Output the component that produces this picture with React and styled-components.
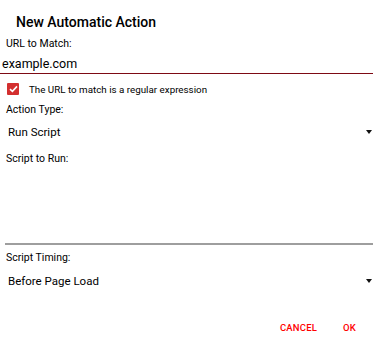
import React from "react";
import styled, { createGlobalStyle } from "styled-components";

const Global = createGlobalStyle`
  html, body { margin: 0; padding: 0; background: #fff; }
  body { font-family: Roboto, "Noto Sans", sans-serif; color: #000; }
  * { box-sizing: border-box; }
`;

const Dialog = styled.div`
  width: 378px;
  height: 349px;
  display: flex;
  flex-direction: column;
  background: #fff;
`;

const Title = styled.div`
  font-size: 14px;
  font-weight: 500;
  padding: 14px 0 0 16px;
  height: 38px;
  line-height: 16px;
`;

const Label = styled.div`
  font-size: 10.5px;
  line-height: 12px;
  padding-left: 6px;
  margin-top: ${(p) => p.$mt || 0}px;
`;

const TextInput = styled.div`
  margin: 6px 5px 0 0;
  padding: 0 0 1px 2px;
  font-size: 12.5px;
  line-height: 16px;
  border-bottom: 1px solid #7d0a14;
`;

const CheckRow = styled.div`
  display: flex;
  align-items: center;
  gap: 10px;
  padding-left: 7px;
  margin-top: 9px;
  font-size: 9.8px;
`;

const Box = styled.div`
  width: 12px;
  height: 12px;
  border-radius: 1px;
  background: #d32f2f;
  display: flex;
  align-items: center;
  justify-content: center;
`;

const Select = styled.div`
  display: flex;
  align-items: center;
  justify-content: space-between;
  padding: 0 6px 0 8px;
  margin-top: ${(p) => p.$mt}px;
  font-size: 11.5px;
  line-height: 14px;
`;

const Caret = styled.div`
  width: 0;
  height: 0;
  border-left: 3px solid transparent;
  border-right: 3px solid transparent;
  border-top: 4px solid #111;
`;

const ScriptArea = styled.div`
  height: 80px;
  margin: 0 5px 0 5px;
  border-bottom: 2px solid #9e9e9e;
`;

const Actions = styled.div`
  display: flex;
  justify-content: flex-end;
  gap: 26px;
  padding-right: 22px;
  margin-top: 34px;
`;

const Action = styled.div`
  color: #ff0000;
  font-size: 9.5px;
  font-weight: 500;
  letter-spacing: 0.2px;
`;

export default function App() {
  return (
    <>
      <Global />
      <Dialog>
        <Title>New Automatic Action</Title>
        <Label>URL to Match:</Label>
        <TextInput>example.com</TextInput>
        <CheckRow>
          <Box>
            <svg width="9" height="8" viewBox="0 0 9 8">
              <path d="M1 4.2 L3.4 6.4 L8 1.4" fill="none" stroke="#fff" strokeWidth="1.6" />
            </svg>
          </Box>
          The URL to match is a regular expression
        </CheckRow>
        <Label $mt={9}>Action Type:</Label>
        <Select $mt={9}>
          Run Script
          <Caret />
        </Select>
        <Label $mt={14}>Script to Run:</Label>
        <ScriptArea />
        <Label $mt={7}>Script Timing:</Label>
        <Select $mt={10}>
          Before Page Load
          <Caret />
        </Select>
        <Actions>
          <Action>CANCEL</Action>
          <Action>OK</Action>
        </Actions>
      </Dialog>
    </>
  );
}
